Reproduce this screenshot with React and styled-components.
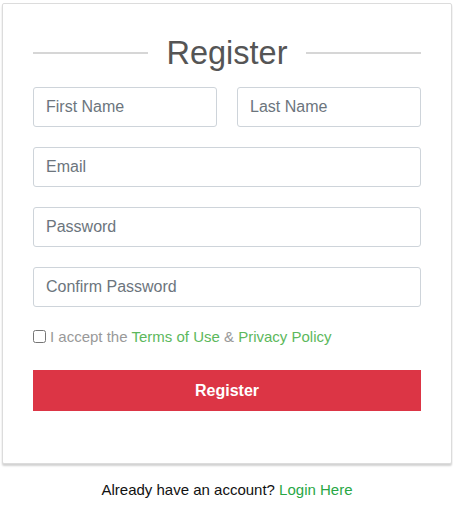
import React from "react";
import styled, { createGlobalStyle } from "styled-components";

const GlobalStyle = createGlobalStyle`
  body {
    margin: 0;
    background: #fff;
    font-family: "Liberation Sans", Arial, sans-serif;
  }
`;

const Page = styled.div`
  padding: 3px 1px 0 2px;
`;

const Card = styled.div`
  background: #fff;
  border: 1px solid #dcdcdc;
  border-radius: 2px;
  box-shadow: 0 2px 2px rgba(0, 0, 0, 0.18);
  padding: 20px 30px 52px 30px;
`;

const Title = styled.div`
  display: flex;
  align-items: center;
  gap: 18px;
  margin-bottom: 5px;
  &::before,
  &::after {
    content: "";
    flex: 1;
    height: 2px;
    background: #d6d6d6;
  }
`;

const TitleText = styled.h2`
  margin: 0;
  font-size: 32.5px;
  font-weight: normal;
  color: #555;
  line-height: 58px;
`;

const Form = styled.form`
  display: flex;
  flex-direction: column;
  gap: 20px;
`;

const Row = styled.div`
  display: grid;
  grid-template-columns: 1fr 1fr;
  gap: 20px;
`;

const Input = styled.input`
  box-sizing: border-box;
  width: 100%;
  height: 40px;
  padding: 0 12px;
  border: 1px solid #ced4da;
  border-radius: 3px;
  font-family: "Liberation Sans", Arial, sans-serif;
  font-size: 16px;
  color: #495057;
  outline: none;
  &::placeholder {
    color: #6c757d;
  }
`;

const Terms = styled.label`
  display: flex;
  align-items: center;
  gap: 4px;
  margin-top: 1px;
  font-size: 15px;
  color: #999;
`;

const Check = styled.input`
  margin: 0;
  width: 13px;
  height: 13px;
`;

const GreenLink = styled.a`
  color: ${(p) => (p.$dark ? "#28a745" : "#5cb85c")};
  text-decoration: none;
`;

const Button = styled.button`
  height: 41px;
  margin-top: 5px;
  border: none;
  background: #dc3545;
  color: #fff;
  font-family: "Liberation Sans", Arial, sans-serif;
  font-weight: bold;
  font-size: 16px;
  cursor: pointer;
`;

const Footer = styled.p`
  margin: 17px 0 0;
  text-align: center;
  font-size: 15px;
  color: #111;
`;

export default function App() {
  return (
    <>
      <GlobalStyle />
      <Page>
        <Card>
          <Title>
            <TitleText>Register</TitleText>
          </Title>
          <Form onSubmit={(e) => e.preventDefault()}>
            <Row>
              <Input placeholder="First Name" />
              <Input placeholder="Last Name" />
            </Row>
            <Input placeholder="Email" />
            <Input type="password" placeholder="Password" />
            <Input type="password" placeholder="Confirm Password" />
            <Terms>
              <Check type="checkbox" />
              <span>
                I accept the <GreenLink href="#">Terms of Use</GreenLink> &amp;{" "}
                <GreenLink href="#">Privacy Policy</GreenLink>
              </span>
            </Terms>
            <Button type="submit">Register</Button>
          </Form>
        </Card>
        <Footer>
          Already have an account? <GreenLink $dark href="#">Login Here</GreenLink>
        </Footer>
      </Page>
    </>
  );
}
